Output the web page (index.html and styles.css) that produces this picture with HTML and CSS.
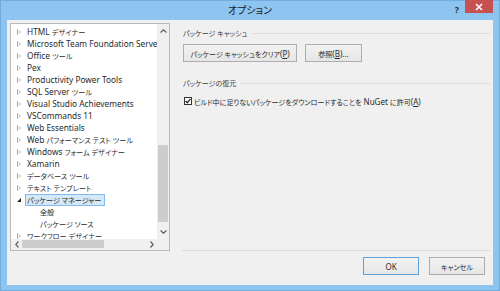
FILE: index.html
```html
<!DOCTYPE html>
<html lang="ja">
<head>
    <meta charset="UTF-8">
    <title>オプション</title>
    <link rel="stylesheet" href="styles.css">
</head>
<body>
    <div class="window">
        <div class="titlebar">
            <span></span>
            <span class="title">オプション</span>
            <div class="caption-btns">
                <span class="help">?</span>
                <span class="close">
                    <svg width="8" height="8" viewBox="0 0 8 8"><path d="M1 1L7 7M7 1L1 7" stroke="#fff" stroke-width="1.6"/></svg>
                </span>
            </div>
        </div>
        <div class="client">
            <div class="main">
                <div class="tree">
                    <div class="tree-view">
                        <ul class="tree-items">
                            <li><i class="arrow"></i>HTML <span class="jp">デザイナー</span></li>
                            <li><i class="arrow"></i>Microsoft Team Foundation Serve</li>
                            <li><i class="arrow"></i>Office <span class="jp">ツール</span></li>
                            <li><i class="arrow"></i>Pex</li>
                            <li><i class="arrow"></i>Productivity Power Tools</li>
                            <li><i class="arrow"></i>SQL Server <span class="jp">ツール</span></li>
                            <li><i class="arrow"></i>Visual Studio Achievements</li>
                            <li><i class="arrow"></i>VSCommands 11</li>
                            <li><i class="arrow"></i>Web Essentials</li>
                            <li><i class="arrow"></i>Web <span class="jp">パフォーマンス テスト ツール</span></li>
                            <li><i class="arrow"></i>Windows <span class="jp">フォーム デザイナー</span></li>
                            <li><i class="arrow"></i>Xamarin</li>
                            <li><i class="arrow"></i><span class="jp">データベース ツール</span></li>
                            <li><i class="arrow"></i><span class="jp">テキスト テンプレート</span></li>
                            <li><i class="arrow open"></i><span class="selected"><span class="jp">パッケージ マネージャー</span></span></li>
                            <li class="child"><span class="jp">全般</span></li>
                            <li class="child"><span class="jp">パッケージ ソース</span></li>
                            <li><i class="arrow"></i><span class="jp">ワークフロー デザイナー</span></li>
                        </ul>
                    </div>
                    <div class="vscroll">
                        <div class="sb-btn">
                            <svg width="7" height="4" viewBox="0 0 7 4"><path d="M0.5 3.5L3.5 0.8L6.5 3.5" fill="none" stroke="#606060" stroke-width="1.2"/></svg>
                        </div>
                        <div class="sb-track">
                            <div class="vthumb"></div>
                        </div>
                        <div class="sb-btn">
                            <svg width="7" height="4" viewBox="0 0 7 4"><path d="M0.5 0.5L3.5 3.2L6.5 0.5" fill="none" stroke="#606060" stroke-width="1.2"/></svg>
                        </div>
                    </div>
                    <div class="hscroll">
                        <div class="sb-btn">
                            <svg width="4" height="7" viewBox="0 0 4 7"><path d="M3.5 0.5L0.8 3.5L3.5 6.5" fill="none" stroke="#606060" stroke-width="1.2"/></svg>
                        </div>
                        <div class="sb-track">
                            <div class="hthumb"></div>
                        </div>
                        <div class="sb-btn">
                            <svg width="4" height="7" viewBox="0 0 4 7"><path d="M0.5 0.5L3.2 3.5L0.5 6.5" fill="none" stroke="#606060" stroke-width="1.2"/></svg>
                        </div>
                    </div>
                    <div class="corner"></div>
                </div>
                <div class="pane">
                    <div class="group-title"><span class="jp">パッケージ キャッシュ</span></div>
                    <div class="button-row">
                        <button class="btn btn-clear"><span class="jp">パッケージ キャッシュをクリア</span>(<u>P</u>)</button>
                        <button class="btn btn-browse"><span class="jp">参照</span>(<u>B</u>)...</button>
                    </div>
                    <div class="group-title group-restore"><span class="jp">パッケージの復元</span></div>
                    <label class="check-row">
                        <span class="checkbox">
                            <svg width="6" height="6" viewBox="0 0 6 6"><path d="M0.6 3L2.3 4.8L5.4 0.8" fill="none" stroke="#222" stroke-width="1.3"/></svg>
                        </span>
                        <span><span class="jp">ビルド中に足りないパッケージをダウンロードすることを</span> NuGet <span class="jp">に許可</span>(<u>A</u>)</span>
                    </label>
                </div>
            </div>
            <div class="footer">
                <button class="btn btn-dialog btn-default">OK</button>
                <button class="btn btn-dialog"><span class="jp">キャンセル</span></button>
            </div>
        </div>
    </div>
</body>
</html>
```

FILE: styles.css
```css
* {
    box-sizing: border-box;
}
body {
    margin: 0;
    padding: 0;
    font-family: "Noto Sans", "Noto Sans CJK JP", sans-serif;
    font-feature-settings: "palt";
    color: #2a2a2a;
}
.window {
    width: 500px;
    height: 291px;
    background-color: #8dc4f0;
    border: 1px solid #72acde;
    display: flex;
    flex-direction: column;
}
.titlebar {
    height: 19px;
    display: grid;
    grid-template-columns: 1fr auto 1fr;
    align-items: start;
}
.title {
    font-size: 10px;
    line-height: 19px;
    color: #1a1a1a;
}
.caption-btns {
    justify-self: end;
    display: flex;
    align-items: start;
    margin-right: 6px;
}
.help {
    font-size: 9px;
    font-weight: bold;
    color: #333;
    line-height: 17px;
    margin-right: 6px;
}
.close {
    width: 28px;
    height: 13px;
    margin-top: -1px;
    background-color: #c75050;
    display: flex;
    align-items: center;
    justify-content: center;
}
.client {
    margin: 0 6px 5px 6px;
    flex: 1;
    background-color: #f0f0f0;
    display: flex;
    flex-direction: column;
    padding: 3px 3px 0 3px;
}
.main {
    display: flex;
    height: 228px;
}
.tree {
    width: 160px;
    height: 228px;
    border: 1px solid #b9b9b9;
    background-color: #fff;
    display: grid;
    grid-template-columns: 1fr 12px;
    grid-template-rows: 1fr 11px;
}
.tree-view {
    overflow: hidden;
}
.tree-items {
    list-style: none;
    margin: 0;
    padding: 2px 0 0 0;
    font-size: 8.3px;
    white-space: nowrap;
}
.tree-items li {
    height: 12px;
    line-height: 12px;
    padding-left: 6px;
}
.tree-items li.child {
    padding-left: 29px;
}
.tree .jp {
    font-size: 0.86em;
}
.arrow {
    display: inline-block;
    vertical-align: middle;
    width: 0;
    height: 0;
    border-top: 3px solid transparent;
    border-bottom: 3px solid transparent;
    border-left: 4px solid #a6a6a6;
    margin: -2px 6px 0 0;
    position: relative;
}
.arrow::after {
    content: "";
    position: absolute;
    left: -3px;
    top: -2px;
    border-top: 2px solid transparent;
    border-bottom: 2px solid transparent;
    border-left: 2px solid #fff;
}
.arrow.open {
    border-top: 0;
    border-left: 4px solid transparent;
    border-bottom: 4px solid #262626;
    margin: -1px 4px 0 0;
}
.arrow.open::after {
    display: none;
}
.selected {
    background-color: #d5e8f8;
    border: 1px solid #84b9ea;
    padding: 0 3px 0 1px;
    display: inline-block;
    line-height: 9px;
    vertical-align: middle;
    margin-top: -2px;
}
.vscroll {
    background-color: #f0f0f0;
    display: flex;
    flex-direction: column;
}
.hscroll {
    background-color: #f0f0f0;
    display: flex;
}
.sb-btn {
    display: flex;
    align-items: center;
    justify-content: center;
}
.vscroll .sb-btn {
    height: 14px;
}
.hscroll .sb-btn {
    width: 11px;
}
.sb-track {
    flex: 1;
}
.vthumb {
    margin: 107px 1px 0 1px;
    height: 77px;
    background-color: #cdcdcd;
}
.hthumb {
    margin: 1px 42px 0 0;
    height: 8px;
    background-color: #cdcdcd;
}
.corner {
    background-color: #f0f0f0;
}
.pane {
    flex: 1;
    margin-left: 12px;
    border-bottom: 1px solid #dcdcdc;
    padding-left: 1px;
    display: flex;
    flex-direction: column;
    font-size: 8px;
}
.pane .jp,
.footer .jp {
    font-size: 0.88em;
}
.group-title {
    display: flex;
    align-items: center;
    height: 12px;
    margin-top: 4px;
    color: #3a3a3a;
}
.group-title::after {
    content: "";
    flex: 1;
    border-top: 1px solid #dcdcdc;
    margin-left: 4px;
}
.group-restore {
    margin-top: 15px;
}
.button-row {
    display: flex;
    gap: 8px;
    margin-top: 5px;
}
.btn {
    font-family: inherit;
    font-feature-settings: inherit;
    font-size: 8px;
    color: #2a2a2a;
    height: 18px;
    padding: 0;
    border: 1px solid #adadad;
    background: linear-gradient(#f2f2f2, #e6e6e6);
}
.btn-clear {
    width: 114px;
}
.btn-browse {
    width: 57px;
}
.check-row {
    display: flex;
    align-items: center;
    height: 12px;
    margin-top: 6px;
    padding-left: 1px;
}
.checkbox {
    width: 8px;
    height: 8px;
    border: 1px solid #333;
    background-color: #fff;
    display: flex;
    align-items: center;
    justify-content: center;
    margin-right: 2px;
}
.footer {
    display: flex;
    justify-content: flex-end;
    gap: 10px;
    padding: 6px 5px 0 0;
}
.btn-dialog {
    width: 56px;
}
.btn-default {
    border-color: #5ea2de;
}
```
